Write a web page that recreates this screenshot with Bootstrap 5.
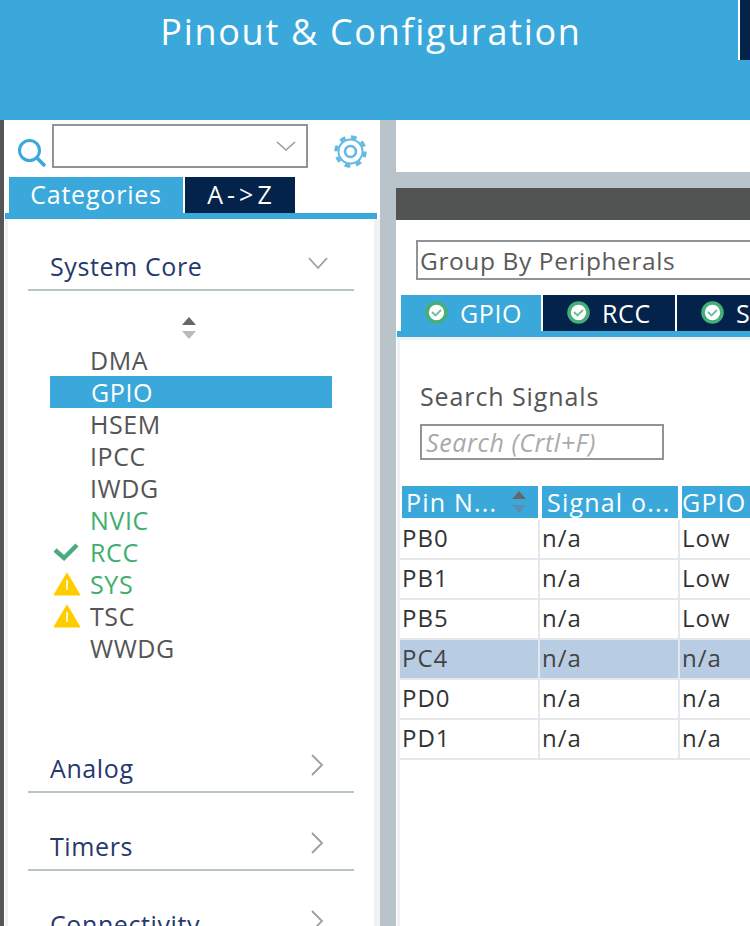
<!DOCTYPE html>
<html lang="en">
<head>
    <meta charset="UTF-8">
    <meta name="viewport" content="width=device-width, initial-scale=1.0">
    <title>Pinout &amp; Configuration</title>
    <link rel="stylesheet" href="https://cdn.jsdelivr.net/npm/bootstrap@5.3.0/dist/css/bootstrap.min.css">
    <style>
        html, body { height: 926px; overflow: hidden; }
        body { font-family: "Open Sans", "Liberation Sans", sans-serif; font-size: 25px; background: #fff; letter-spacing: .6px; }
        .top-head { height: 120px; background: #3ba8dc; color: #fff; }
        .top-title { width: 738px; height: 66px; font-size: 36px; letter-spacing: 1.7px; line-height: 64px; text-align: center; padding-left: 4px; }
        .top-sliver { width: 12px; height: 60px; background: #03234b; border-left: 2px solid #fff; }
        .work-area { height: 806px; }
        .left-col { width: 380px; border-left: 4px solid #555; flex: none; }
        .divider-col { width: 16px; background: #b8c3ca; flex: none; }
        .right-col { width: 354px; flex: none; overflow: hidden; }

        .find-row { height: 57px; padding-top: 4px; }
        .find-icon { width: 48px; padding: 8px 0 0 14px; }
        .find-box { width: 256px; height: 44px; border: 2px solid #8f9499; padding: 0 10px; }
        .gear-icon { margin: 6px 0 0 26px; }
        .tab-row { height: 36px; padding-left: 5px; gap: 2px; }
        .tab-item { height: 36px; color: #fff; background: #03234b; line-height: 35px; letter-spacing: .8px; }
        .tab-item.on { background: #3ba8dc; }
        .tab-cat { width: 174px; text-align: center; }
        .tab-az { width: 110px; text-align: center; letter-spacing: 4px; padding-left: 3px; }
        .blue-rule { height: 6px; background: #3ba8dc; margin: 0 3px 0 1px; }
        .left-pane { height: 707px; margin: 0 0 0 1px; border-left: 3px solid #f0f1f3; border-right: 6px solid #f0f1f3; }

        .group-head { height: 78px; margin-left: 20px; width: 326px; border-bottom: 2px solid #b8c3ca; padding: 0 0 8px 22px; color: #26386e; line-height: 30px; }
        .group-head svg { margin: 0 30px 7px 0; }
        .group-head.first { height: 72px; }
        .group-head.first svg { margin: 0 26px 11px 0; }
        .sort-mark { height: 53px; padding: 25px 0 0 172px; }
        .core-list { margin-left: 42px; width: 282px; height: 371px; }
        .core-item { height: 32px; line-height: 32px; color: #555; }
        .core-item.sel { background: #3ba8dc; color: #fff; padding-left: 1px; }
        .core-item.ok { color: #3fae6f; }
        .core-mark { width: 40px; flex: none; padding-left: 3px; }

        .right-top { height: 52px; }
        .right-gap { height: 16px; background: #b8c3ca; }
        .right-dark { height: 32px; background: #525453; }
        .group-select { width: 400px; height: 40px; margin: 20px 0 15px 20px; border: 2px solid #8f9499; color: #5a5a5a; padding-left: 2px; line-height: 37px; font-size: 24.500px; }
        .tab-row-2 { padding-left: 5px; gap: 2px; height: 36px; width: 400px; }
        .tab-item2 { height: 36px; color: #fff; background: #03234b; line-height: 36px; gap: 12px; padding-left: 24px; flex: none; }
        .tab-item2 svg { margin-top: -2px; }
        .tab-item2.on { background: #3ba8dc; }
        .tab-gpio { width: 140px; }
        .tab-rcc { width: 132px; }
        .tab-s { width: 132px; }
        .blue-rule-2 { height: 6px; background: #3ba8dc; margin-left: 1px; }
        .signal-pane { height: 600px; margin-left: 1px; border-left: 3px solid #f0f1f3; border-top: 3px solid #f0f1f3; }
        .signal-label { margin: 41px 0 12px 20px; color: #555; line-height: 30px; height: 31px; letter-spacing: .9px; }
        .signal-search { width: 244px; height: 36px; margin-left: 20px; border: 2px solid #8f9499; color: #aaa; font-style: italic; line-height: 33px; padding-left: 4px; }
        .pin-table { margin-top: 26px; table-layout: fixed; width: 420px; border-collapse: separate; border-spacing: 0; }
        .pin-table th { width: 140px; height: 34px; padding: 0 0 0 4px; background: #3ba8dc; color: #fff; font-weight: 400; border: 2px solid #fff; border-top: 0; border-width: 0 2px 2px; line-height: 32px; white-space: nowrap; overflow: hidden; position: relative; background-clip: padding-box; letter-spacing: 1.200px; }
        .pin-table th:nth-child(2) { padding-left: 5px; }
        .pin-table th:last-child { padding-left: 0; }
        .pin-table td { height: 40px; padding: 0 0 2px 2px; color: #333; border-right: 2px solid #e3e8ec; border-bottom: 2px solid #e3e8ec; font-size: 24px; letter-spacing: 1px; }
        .pin-table tr.picked td { background: #b8cde3; color: #444; }
        .th-sort { position: absolute; right: 10px; top: 4px; }
    </style>
</head>
<body>
    <div class="top-head d-flex align-items-start">
        <div class="top-title">Pinout &amp; Configuration</div>
        <div class="top-sliver"></div>
    </div>

    <div class="work-area d-flex">
        <div class="left-col">
            <div class="find-row d-flex align-items-start">
                <div class="find-icon">
                    <svg width="28" height="28" viewBox="0 0 28 28" fill="none" stroke="#3ba8dc"><circle cx="11.5" cy="11.5" r="10" stroke-width="3"/><path d="M19 19l8 8" stroke-width="3.600"/></svg>
                </div>
                <div class="find-box d-flex align-items-center justify-content-end">
                    <svg width="20" height="11" viewBox="0 0 20 11" fill="none" stroke="#9a9ea1" stroke-width="1.600"><path d="M1 1l9 8 9-8"/></svg>
                </div>
                <div class="gear-icon">
                    <svg width="33" height="33" viewBox="0 0 33 33" fill="none" stroke="#62bae4"><circle cx="16.5" cy="16.5" r="12" stroke-width="2"/><circle cx="16.5" cy="16.5" r="14.500" stroke-width="3.500" stroke-dasharray="5.700 5.700"/><circle cx="16.5" cy="16.5" r="5.500" stroke-width="2.600"/></svg>
                </div>
            </div>
            <div class="tab-row d-flex">
                <div class="tab-item on tab-cat">Categories</div>
                <div class="tab-item tab-az">A-&gt;Z</div>
            </div>
            <div class="blue-rule"></div>
            <div class="left-pane">
                <div class="group-head first d-flex justify-content-between align-items-end">
                    <span>System Core</span>
                    <svg class="d-block" width="20" height="13" viewBox="0 0 20 13" fill="none" stroke="#9a9ea1" stroke-width="1.800"><path d="M1 1l9 10 9-10"/></svg>
                </div>
                <div class="sort-mark">
                    <svg class="d-block" width="18" height="24" viewBox="0 0 18 24"><path d="M9 1l7 8H2z" fill="#666"/><path d="M9 23l7-8H2z" fill="#bbb"/></svg>
                </div>
                <div class="core-list" id="coreList"></div>
                <div class="group-head d-flex justify-content-between align-items-end">
                    <span>Analog</span>
                    <svg class="d-block" width="13" height="22" viewBox="0 0 13 22" fill="none" stroke="#9a9ea1" stroke-width="1.800"><path d="M1 1l10 10L1 21"/></svg>
                </div>
                <div class="group-head d-flex justify-content-between align-items-end">
                    <span>Timers</span>
                    <svg class="d-block" width="13" height="22" viewBox="0 0 13 22" fill="none" stroke="#9a9ea1" stroke-width="1.800"><path d="M1 1l10 10L1 21"/></svg>
                </div>
                <div class="group-head d-flex justify-content-between align-items-end">
                    <span>Connectivity</span>
                    <svg class="d-block" width="13" height="22" viewBox="0 0 13 22" fill="none" stroke="#9a9ea1" stroke-width="1.800"><path d="M1 1l10 10L1 21"/></svg>
                </div>
            </div>
        </div>

        <div class="divider-col"></div>

        <div class="right-col">
            <div class="right-top"></div>
            <div class="right-gap"></div>
            <div class="right-dark"></div>
            <div class="group-select">Group By Peripherals</div>
            <div class="tab-row-2 d-flex" id="peripheralTabs"></div>
            <div class="blue-rule-2"></div>
            <div class="signal-pane">
                <div class="signal-label">Search Signals</div>
                <div class="signal-search">Search (Crtl+F)</div>
                <table class="pin-table">
                    <thead>
                        <tr>
                            <th>Pin N...<svg class="th-sort" width="18" height="24" viewBox="0 0 18 24"><path d="M9 1l7 8H2z" fill="#666"/><path d="M9 23l7-8H2z" fill="#5a8db0"/></svg></th>
                            <th>Signal o...</th>
                            <th>GPIO output</th>
                        </tr>
                    </thead>
                    <tbody id="pinRows"></tbody>
                </table>
            </div>
        </div>
    </div>

    <script>
        const warn = '<svg class="d-block" width="28" height="24" viewBox="0 0 28 24"><path d="M14 1L27 23H1z" fill="#ffcc00" stroke="#ffcc00" stroke-linejoin="round"/><path d="M14 8v10" stroke="#fff6c8" stroke-width="2"/></svg>';
        const tick = '<svg class="d-block" width="26" height="20" viewBox="0 0 26 20"><path d="M2 8l9 8L24 3" fill="none" stroke="#4aab7c" stroke-width="4.500"/></svg>';
        const okRing = '<svg width="23" height="23" viewBox="0 0 23 23"><circle cx="11.5" cy="11.5" r="9.500" fill="#fff" stroke="#46ae78" stroke-width="3.600"/><path d="M7 11l3.500 3.500 5.500-5.500" fill="none" stroke="#6cc096" stroke-width="1.800"/></svg>';

        const tabs = [['GPIO', 'tab-gpio on'], ['RCC', 'tab-rcc'], ['SYS', 'tab-s']];
        document.getElementById('peripheralTabs').innerHTML = tabs.map(t => `
            <div class="tab-item2 ${t[1]} d-flex align-items-center">${okRing}${t[0]}</div>
        `).join('');

        const coreItems = [
            { name: 'DMA' }, { name: 'GPIO', cls: 'sel' }, { name: 'HSEM' }, { name: 'IPCC' }, { name: 'IWDG' },
            { name: 'NVIC', cls: 'ok' }, { name: 'RCC', cls: 'ok', mark: tick }, { name: 'SYS', cls: 'ok', mark: warn },
            { name: 'TSC', mark: warn }, { name: 'WWDG' }
        ];
        document.getElementById('coreList').innerHTML = coreItems.map(item => `
            <div class="core-item d-flex align-items-center ${item.cls || ''}"><span class="core-mark">${item.mark || ''}</span>${item.name}</div>
        `).join('');

        const pins = [
            ['PB0', 'n/a', 'Low'], ['PB1', 'n/a', 'Low'], ['PB5', 'n/a', 'Low'],
            ['PC4', 'n/a', 'n/a', true], ['PD0', 'n/a', 'n/a'], ['PD1', 'n/a', 'n/a']
        ];
        document.getElementById('pinRows').innerHTML = pins.map(p => `
            <tr class="${p[3] ? 'picked' : ''}"><td>${p[0]}</td><td>${p[1]}</td><td>${p[2]}</td></tr>
        `).join('');
    </script>
    <script src="https://cdn.jsdelivr.net/npm/bootstrap@5.3.0/dist/js/bootstrap.bundle.min.js"></script>
</body>
</html>
